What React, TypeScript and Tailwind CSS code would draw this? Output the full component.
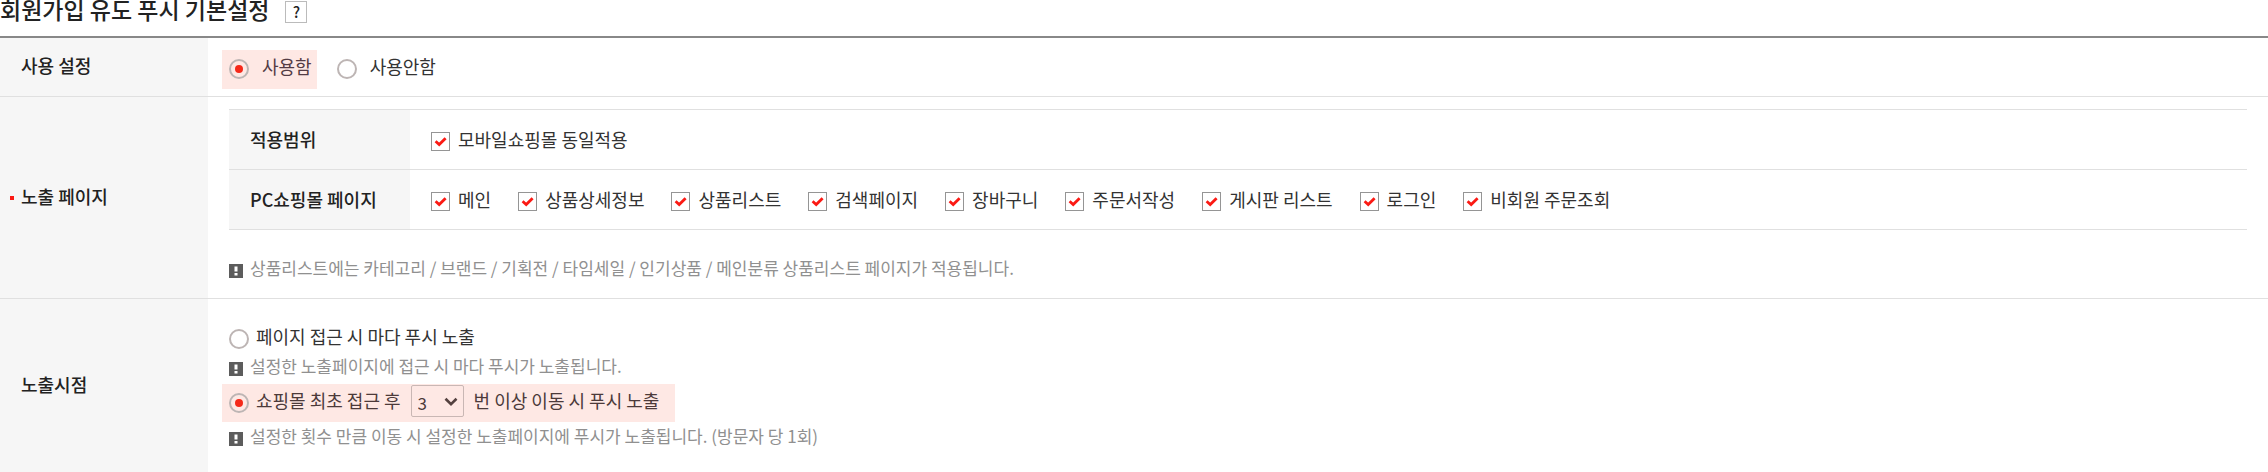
import { useState } from "react";
import type { ReactNode } from "react";

const PC_PAGES = [
  "메인",
  "상품상세정보",
  "상품리스트",
  "검색페이지",
  "장바구니",
  "주문서작성",
  "게시판 리스트",
  "로그인",
  "비회원 주문조회",
];

function Radio({ name, id, checked, onChange }: { name: string; id: string; checked: boolean; onChange: () => void }) {
  return (
    <input
      type="radio"
      name={name}
      id={id}
      checked={checked}
      onChange={onChange}
      className="mt-1.5 grid size-5 shrink-0 appearance-none place-items-center rounded-full border-2 border-[#bdb5b4] before:size-2 before:rounded-full checked:before:bg-[#f5291a]"
    />
  );
}

function Check({ label }: { label: string }) {
  return (
    <label className="flex items-center gap-2 pb-0.5">
      <span className="relative mt-1.5 size-[19px] shrink-0">
        <input
          type="checkbox"
          defaultChecked
          className="peer block size-[19px] appearance-none border border-[#959595] bg-white"
        />
        <svg
          viewBox="0 0 19 19"
          className="pointer-events-none absolute inset-0 hidden size-[19px] peer-checked:block"
          fill="none"
          stroke="#fb1a14"
          strokeWidth="2.8"
        >
          <path d="M4.6 9.3 8.2 12.6 14.6 6.2" />
        </svg>
      </span>
      {label}
    </label>
  );
}

function Note({ children }: { children: ReactNode }) {
  return (
    <p className="flex items-center gap-[7px] text-[17px] leading-6 text-[#909090]">
      <svg viewBox="0 0 14 14" className="mt-1.5 size-3.5 shrink-0">
        <rect width="14" height="14" fill="#5c5c5c" />
        <path d="M5.5 2.5h3v5h-3zM5.5 9h3v2.5h-3z" fill="#fff" />
      </svg>
      {children}
    </p>
  );
}

function Row({ title, required, children }: { title: string; required?: boolean; children: ReactNode }) {
  return (
    <tr className="group">
      <th
        scope="row"
        className="w-52 border-b border-[#e0e0e0] bg-[#f6f6f6] pb-1 text-left font-medium text-[#222] group-last:border-b-0"
      >
        <span className="flex items-center">
          <span className="flex w-[21px] justify-center">
            {required && <i className="mt-1 ml-0.5 size-1 bg-[#fb1a14]" />}
          </span>
          {title}
        </span>
      </th>
      <td className="border-b border-[#e0e0e0] px-[21px] group-last:border-b-0">{children}</td>
    </tr>
  );
}

export default function App() {
  const [use, setUse] = useState(true);
  const [timing, setTiming] = useState("move");

  return (
    <main className="bg-white font-['Noto_Sans_CJK_KR',sans-serif] text-[18px] leading-6 text-[#333]">
      <div className="flex h-9 items-start gap-4">
        <h2 className="text-[23px] leading-[18px] font-medium text-[#222]">회원가입 유도 푸시 기본설정</h2>
        <button
          type="button"
          aria-label="도움말"
          className="mt-px size-[22px] border border-[#bbb] text-[15px] leading-5 font-medium text-[#222]"
        >
          ?
        </button>
      </div>

      <table className="w-full table-fixed border-separate border-spacing-0 border-t-2 border-[#888]">
        <tbody>
          <Row title="사용 설정">
            <div className="flex h-[58px] items-center gap-5 pt-1">
              <label className="-ml-[7px] flex h-[39px] items-center gap-[13px] bg-[#fee8e4] pr-[5px] pb-1.5 pl-[7px] text-[#543c44]">
                <Radio name="use" id="use-y" checked={use} onChange={() => setUse(true)} />
                사용함
              </label>
              <label className="flex h-[39px] items-center gap-[13px] pb-1.5">
                <Radio name="use" id="use-n" checked={!use} onChange={() => setUse(false)} />
                사용안함
              </label>
            </div>
          </Row>

          <Row title="노출 페이지" required>
            <div className="pt-3 pb-[18px]">
              <table className="w-full table-fixed border-separate border-spacing-0 border-t border-[#e0e0e0]">
                <tbody>
                  <tr>
                    <th
                      scope="row"
                      className="w-[181px] border-b border-[#e0e0e0] bg-[#f6f6f6] pb-0.5 pl-[21px] text-left font-medium text-[#222]"
                    >
                      적용범위
                    </th>
                    <td className="h-15 border-b border-[#e0e0e0] px-[21px]">
                      <Check label="모바일쇼핑몰 동일적용" />
                    </td>
                  </tr>
                  <tr>
                    <th
                      scope="row"
                      className="border-b border-[#e0e0e0] bg-[#f6f6f6] pb-0.5 pl-[21px] text-left font-medium text-[#222]"
                    >
                      PC쇼핑몰 페이지
                    </th>
                    <td className="h-15 border-b border-[#e0e0e0] px-[21px]">
                      <div className="flex flex-wrap gap-x-[27px]">
                        {PC_PAGES.map((p) => (
                          <Check key={p} label={p} />
                        ))}
                      </div>
                    </td>
                  </tr>
                </tbody>
              </table>
              <div className="mt-[26px]">
                <Note>상품리스트에는 카테고리 / 브랜드 / 기획전 / 타임세일 / 인기상품 / 메인분류 상품리스트 페이지가 적용됩니다.</Note>
              </div>
            </div>
          </Row>

          <Row title="노출시점">
            <div className="pt-6 pb-6">
              <label className="flex items-center gap-[7px]">
                <Radio name="timing" id="timing-every" checked={timing === "every"} onChange={() => setTiming("every")} />
                페이지 접근 시 마다 푸시 노출
              </label>
              <div className="mt-[5px]">
                <Note>설정한 노출페이지에 접근 시 마다 푸시가 노출됩니다.</Note>
              </div>
              <div className="mt-1.5 -ml-[7px] flex h-[38px] w-fit items-center gap-2.5 bg-[#fee8e4] pr-4 pl-[7px] text-[#4c3a3a]">
                <label htmlFor="timing-move" className="flex items-center gap-[7px] pb-1.5">
                  <Radio name="timing" id="timing-move" checked={timing === "move"} onChange={() => setTiming("move")} />
                  쇼핑몰 최초 접근 후
                </label>
                <span className="relative pb-1">
                  <select
                    aria-label="이동 횟수"
                    defaultValue="3"
                    className="block h-8 w-[53px] appearance-none rounded-xs border border-[#c9b7b4] pt-1 pl-1.5 text-[17px] leading-6"
                  >
                    {[1, 2, 3, 4, 5].map((n) => (
                      <option key={n}>{n}</option>
                    ))}
                  </select>
                  <svg
                    viewBox="0 0 14 10"
                    className="pointer-events-none absolute top-3 right-1.5 h-2.5 w-3.5"
                    fill="none"
                    stroke="#54413f"
                    strokeWidth="2.6"
                  >
                    <path d="M1.5 1.8 7 7.2 12.5 1.8" />
                  </svg>
                </span>
                <label htmlFor="timing-move" className="pb-1.5">번 이상 이동 시 푸시 노출</label>
              </div>
              <div className="mt-0.5">
                <Note>설정한 횟수 만큼 이동 시 설정한 노출페이지에 푸시가 노출됩니다. (방문자 당 1회)</Note>
              </div>
            </div>
          </Row>
        </tbody>
      </table>
    </main>
  );
}
